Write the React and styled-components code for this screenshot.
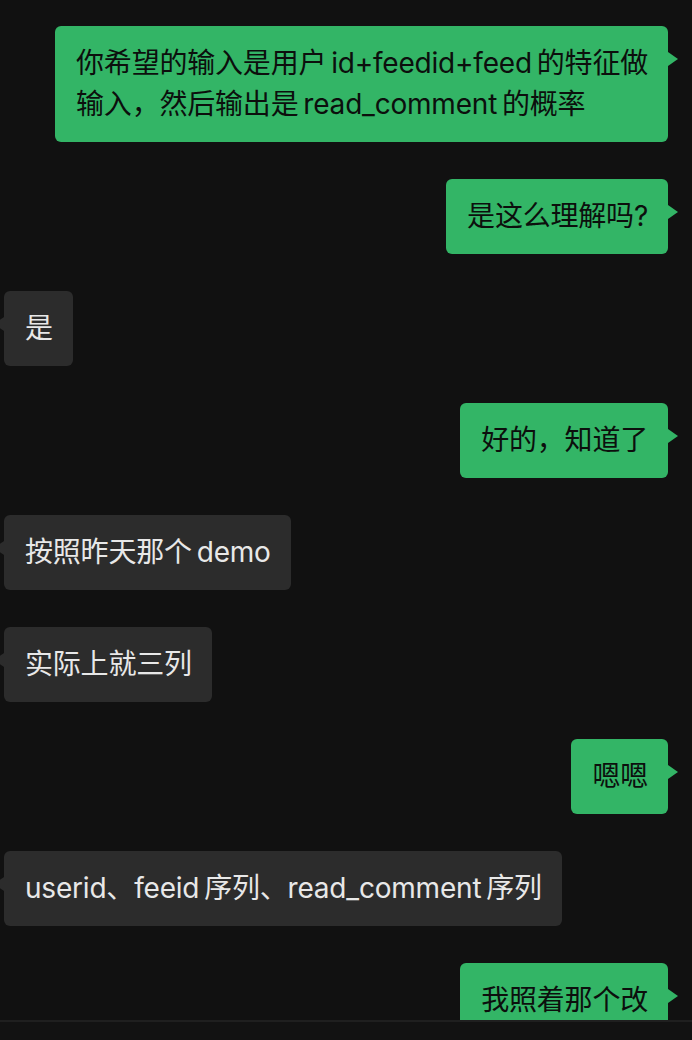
import React from "react";
import styled, { createGlobalStyle, css } from "styled-components";

const GlobalStyle = createGlobalStyle`
  html, body {
    margin: 0;
    padding: 0;
    background: #111111;
  }
  * {
    box-sizing: border-box;
  }
`;

const Page = styled.div`
  width: 692px;
  height: 1040px;
  display: flex;
  flex-direction: column;
  background: #111111;
  font-family: "Inter", "Noto Sans CJK SC", sans-serif;
  overflow: hidden;
`;

const ChatArea = styled.div`
  flex: 1;
  min-height: 0;
  overflow: hidden;
  display: flex;
  flex-direction: column;
  gap: 37px;
  padding: 26px 24px 0 4px;
`;

const Row = styled.div`
  display: flex;
  flex-shrink: 0;
  justify-content: ${(p) => (p.$mine ? "flex-end" : "flex-start")};
`;

const Bubble = styled.div`
  position: relative;
  padding: 17px 20px 17px 21px;
  border-radius: 6px;
  font-size: 28px;
  line-height: 41px;
  letter-spacing: -0.2px;
  white-space: pre-line;

  ${(p) =>
    p.$mine
      ? css`
          background: #33b566;
          color: #0c0f0d;
        `
      : css`
          background: #2c2c2c;
          color: #e8e8e8;
        `}

  &::after {
    content: "";
    position: absolute;
    top: 26px;
    width: 0;
    height: 0;
    border-top: 7px solid transparent;
    border-bottom: 7px solid transparent;
    ${(p) =>
      p.$mine
        ? css`
            right: -10px;
            border-left: 10px solid #33b566;
          `
        : css`
            left: -10px;
            border-right: 10px solid #2c2c2c;
          `}
  }
`;

const Footer = styled.div`
  height: 20px;
  flex-shrink: 0;
  border-top: 2px solid #1f1f1f;
  background: #121212;
`;

const messages = [
  {
    mine: true,
    text: "你希望的输入是用户\u2009id+feedid+feed\u2009的特征做\n输入，然后输出是\u2009read_comment\u2009的概率",
  },
  { mine: true, text: "是这么理解吗?" },
  { mine: false, text: "是" },
  { mine: true, text: "好的，知道了" },
  { mine: false, text: "按照昨天那个\u2009demo" },
  { mine: false, text: "实际上就三列" },
  { mine: true, text: "嗯嗯" },
  { mine: false, text: "userid、feeid\u2009序列、read_comment\u2009序列" },
  { mine: true, text: "我照着那个改" },
];

export default function App() {
  return (
    <Page>
      <GlobalStyle />
      <ChatArea>
        {messages.map((m, i) => (
          <Row key={i} $mine={m.mine}>
            <Bubble $mine={m.mine}>{m.text}</Bubble>
          </Row>
        ))}
      </ChatArea>
      <Footer />
    </Page>
  );
}
